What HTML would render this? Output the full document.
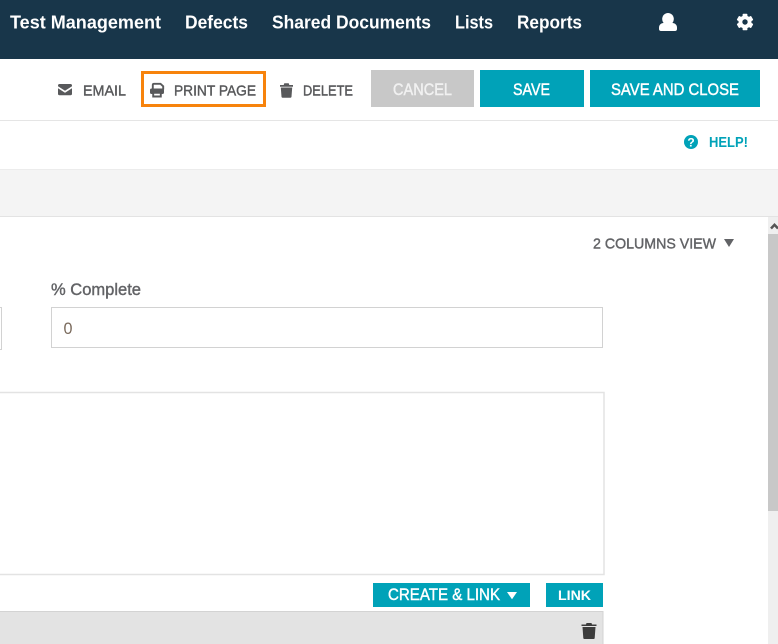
<!DOCTYPE html>
<html><head><meta charset="utf-8"><style>
html,body{margin:0;padding:0;width:778px;height:644px;overflow:hidden;background:#fff}
svg{display:block}
text{font-family:"Liberation Sans",sans-serif}
</style></head><body>
<svg width="778" height="644" viewBox="0 0 778 644" xmlns="http://www.w3.org/2000/svg">
<rect width="778" height="644" fill="#fff"/>
<!-- header -->
<rect width="778" height="59" fill="#18364a"/>
<g fill="#fff" font-weight="700" font-size="18">
<text x="10" y="28.300" textLength="151" lengthAdjust="spacingAndGlyphs">Test Management</text>
<text x="185" y="28.300" textLength="63" lengthAdjust="spacingAndGlyphs">Defects</text>
<text x="272" y="28.300" textLength="159" lengthAdjust="spacingAndGlyphs">Shared Documents</text>
<text x="455" y="28.300" textLength="38" lengthAdjust="spacingAndGlyphs">Lists</text>
<text x="517" y="28.300" textLength="65" lengthAdjust="spacingAndGlyphs">Reports</text>
</g>
<!-- user icon -->
<g fill="#fff">
<ellipse cx="668" cy="19" rx="5.800" ry="6"/>
<path d="M659 29v-1.500c0-2.500 2-4.500 4.500-4.500h9c2.500 0 4.500 2 4.500 4.500v1.500c0 1.200-.8 2-2 2h-14c-1.200 0-2-.8-2-2z"/>
</g>
<!-- gear icon -->
<g transform="translate(745 22)">
<g fill="#fff">
<circle r="6.500"/>
<rect x="-2.400" y="-8.300" width="4.800" height="16.600" rx=".8"/>
<rect x="-2.400" y="-8.300" width="4.800" height="16.600" rx=".8" transform="rotate(60)"/>
<rect x="-2.400" y="-8.300" width="4.800" height="16.600" rx=".8" transform="rotate(120)"/>
</g>
<circle r="2.700" fill="#18364a"/>
</g>
<!-- toolbar -->
<g fill="#58595b" font-size="14.500" stroke="#58595b" stroke-width=".4">
<text x="83" y="95.300" textLength="43" lengthAdjust="spacingAndGlyphs">EMAIL</text>
<text x="174" y="95.300" textLength="82" lengthAdjust="spacingAndGlyphs">PRINT PAGE</text>
<text x="303" y="95.300" textLength="50" lengthAdjust="spacingAndGlyphs">DELETE</text>
</g>
<!-- mail icon -->
<path d="M58 85.500c0-1 .7-1.500 1.500-1.500h11c.8 0 1.500.5 1.500 1.500v.8l-7 4.400-7-4.400z" fill="#58595b"/>
<path d="M58 88.300l7 4.400 7-4.400v5.700c0 .7-.7 1.200-1.500 1.200h-11c-.8 0-1.500-.5-1.500-1.200z" fill="#58595b"/>
<!-- print box -->
<rect x="142.500" y="72.500" width="122" height="33" fill="none" stroke="#f7830c" stroke-width="3"/>
<!-- printer icon -->
<path d="M152.800 89.500v-4.500c0-.8.5-1.200 1.200-1.200h6.500l2.700 2.500v3.200" fill="none" stroke="#58595b" stroke-width="1.900"/>
<rect x="150" y="88.500" width="14" height="5.500" rx="1.600" fill="#58595b"/>
<path d="M153.200 92.800h7.600v3.700h-7.600z" fill="#fff" stroke="#58595b" stroke-width="1.900"/>
<!-- trash icon -->
<path d="M280 85h13v1.700h-13zM284.300 83.200h4.400l.7 2h-5.800z" fill="#58595b"/>
<path d="M280.800 87.500h11.400l-.7 9.300c0 .5-.5.9-1 .9h-8c-.5 0-1-.4-1-.9z" fill="#58595b"/>
<!-- buttons -->
<rect x="371" y="70" width="103" height="37" fill="#c8c8c8"/>
<rect x="480" y="70" width="104" height="37" fill="#00a2b8"/>
<rect x="590" y="70" width="170" height="37" fill="#00a2b8"/>
<g font-size="17" fill="#fff" stroke="#fff" stroke-width=".45">
<text x="393" y="95" textLength="59" lengthAdjust="spacingAndGlyphs" fill="#f1f1f1" stroke="#f1f1f1">CANCEL</text>
<text x="513" y="95" textLength="37" lengthAdjust="spacingAndGlyphs">SAVE</text>
<text x="611" y="95" textLength="128" lengthAdjust="spacingAndGlyphs">SAVE AND CLOSE</text>
</g>
<rect y="120" width="778" height="1" fill="#e5e5e5"/>
<!-- help -->
<circle cx="691" cy="142" r="7" fill="#00a2b8"/>
<text x="691" y="146.500" text-anchor="middle" font-size="12" font-weight="700" fill="#fff">?</text>
<text x="709" y="147" font-size="14.500" font-weight="700" fill="#00a2b8" textLength="39" lengthAdjust="spacingAndGlyphs">HELP!</text>
<!-- gray band -->
<rect y="169" width="778" height="48" fill="#f4f4f4"/>
<rect y="169" width="778" height="1" fill="#ececec"/>
<rect y="216" width="778" height="1" fill="#e3e3e3"/>
<!-- columns view -->
<text x="593" y="248.500" font-size="14.500" fill="#626366" stroke="#626366" stroke-width=".4" textLength="123" lengthAdjust="spacingAndGlyphs">2 COLUMNS VIEW</text>
<path d="M724 239h10l-5 8z" fill="#626366"/>
<!-- label -->
<text x="51" y="295" font-size="16.500" fill="#626366" stroke="#626366" stroke-width=".4" textLength="90" lengthAdjust="spacingAndGlyphs">% Complete</text>
<!-- inputs -->
<rect x="51.500" y="307.500" width="551" height="40" fill="#fff" stroke="#d2d2d2"/>
<text x="63.500" y="334" font-size="17" fill="#7a6a5c" textLength="9" lengthAdjust="spacingAndGlyphs">0</text>
<rect x="-5" y="307.500" width="6.500" height="42" fill="#fff" stroke="#d2d2d2"/>
<!-- textarea -->
<rect x="-5" y="392.500" width="609" height="182" fill="#fff" stroke="#e3e3e3" stroke-width="1.500"/>
<!-- create/link -->
<rect x="373" y="583" width="157" height="24" fill="#00a2b8"/>
<rect x="546" y="583" width="57" height="24" fill="#00a2b8"/>
<text x="388" y="600" font-size="16.500" fill="#fff" stroke="#fff" stroke-width=".4" textLength="112" lengthAdjust="spacingAndGlyphs">CREATE &amp; LINK</text>
<path d="M507 592h10l-5 7.200z" fill="#fff"/>
<text x="558" y="600" font-size="14" font-weight="700" fill="#fff" textLength="33" lengthAdjust="spacingAndGlyphs">LINK</text>
<!-- grey row -->
<rect x="-5" y="611.500" width="608" height="40" fill="#e3e3e3" stroke="#d3d3d3"/>
<path d="M581.500 624.500h15v1.500h-15zM586.500 623h5l.5 1.500h-6z" fill="#3c3c3c"/>
<path d="M582.500 627h13l-.8 11c0 .6-.5 1-1 1h-9.400c-.5 0-1-.4-1-1z" fill="#3c3c3c"/>
<!-- scrollbar -->
<rect x="768" y="217" width="10" height="427" fill="#efefef"/>
<rect x="768" y="234" width="10" height="277" fill="#c8c8c8"/>
<path d="M771 228.500l3.500-3.700 3.500 3.700" fill="none" stroke="#555" stroke-width="2.500"/>
</svg>
</body></html>
